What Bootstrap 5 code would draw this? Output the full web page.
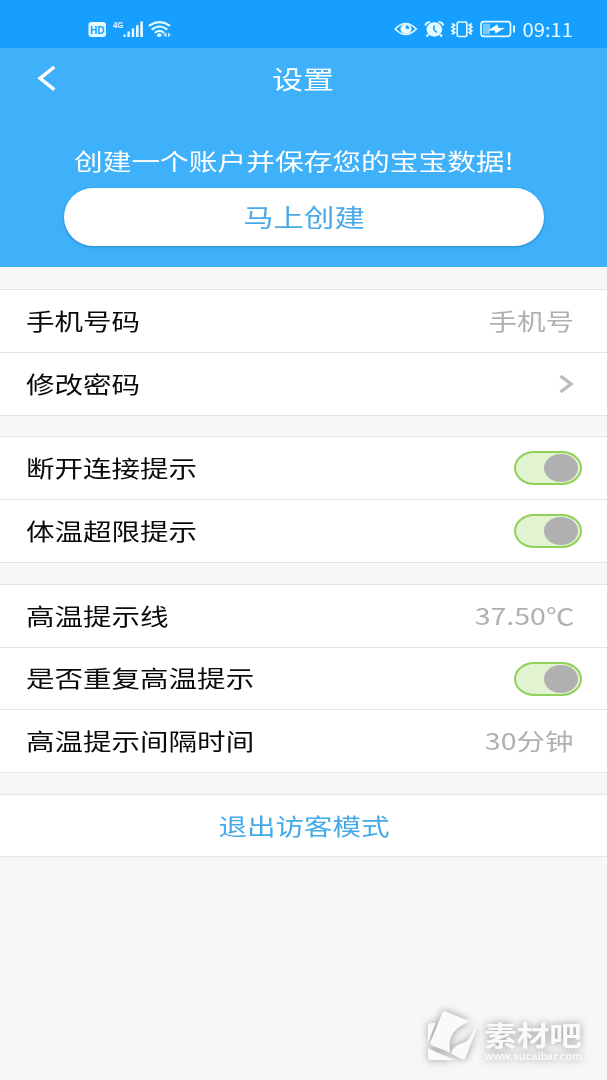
<!DOCTYPE html>
<html lang="zh-CN">
<head>
<meta charset="utf-8">
<meta name="viewport" content="width=device-width, initial-scale=1">
<title>设置</title>
<link href="https://cdn.jsdelivr.net/npm/bootstrap@5.3.0/dist/css/bootstrap.min.css" rel="stylesheet">
<style>
  body { font-family: "Noto Sans CJK SC", sans-serif; background: #f7f7f7; color: #0a0a0a; font-size: 23px; line-height: 1; }
  /* wide letterforms used across the app */
  .wide { display: inline-block; white-space: nowrap; padding-bottom: 2px; transform: scaleX(1.24); transform-origin: center; }
  .wide-start { transform-origin: left center; }
  .wide-end { transform-origin: right center; }
  .status { height: 48px; background: #169fff; padding: 10px 34px 0 88px; }
  .status svg { display: block; }
  .clock { font-size: 18px; color: #e6fbff; transform: scaleX(1.12); transform-origin: right center; line-height: 38px; margin-left: 10px; }
  .hero { height: 219px; background: #3fb1fa; color: #fff; }
  .titlebar { height: 62px; font-size: 25px; }
  .titlebar svg { display: block; }
  .side { width: 100px; padding-left: 37px; }
  .prompt { height: 24px; margin-top: 39px; padding-left: 74px; }
  .prompt .wide { transform: scaleX(1.248); }
  .btn-create { width: 480px; height: 58px; margin-top: 15px; background: #fff; color: #4aa9e6; font-size: 24.500px; line-height: 1; box-shadow: 0 1px 3px rgba(20,100,160,.5); }
  .btn-create .wide { padding-bottom: 0; }
  .group { border-top: 1px solid #e5e5e5; border-radius: 0; }
  .group .list-group-item { height: 63px; padding: 0 33px 0 25.500px; border: 0; border-bottom: 1px solid #e5e5e5; color: inherit; }
  .group .list-group-item.short { height: 62px; }
  .group .list-group-item.has-switch { padding-right: 25px; }
  .group .list-group-item.action { padding: 0 26px; }
  .g1 { margin-top: 22px; } .g2 { margin-top: 20px; } .g3, .g4 { margin-top: 21px; }
  .value { color: #b0b0b0; }
  .toggle { width: 68px; height: 34px; border: 2px solid #92d05c; border-radius: 20px / 17px; background: #e2f3d2; padding-right: 2px; }
  .knob { width: 34px; height: 28px; border-radius: 50%; background: #b0b0b0; }
  .exit { color: #46aae8; padding-bottom: 0; }
  .brand { padding: 0 25px 19px 0; }
  .brand svg { display: block; overflow: visible; filter: drop-shadow(0 0 4px rgba(0,0,0,.4)); }
</style>
</head>
<body class="min-vh-100 d-flex flex-column overflow-hidden">
<header>
  <div class="status d-flex justify-content-between">
    <svg width="86" height="38" viewBox="0 0 86 38" fill="#e6fbff">
      <rect x="0.5" y="12" width="17.5" height="15" rx="3"/>
      <text x="2" y="23.5" font-size="11" font-weight="700" fill="#169fff" textLength="14.5" lengthAdjust="spacingAndGlyphs" font-family="Liberation Sans, sans-serif">HD</text>
      <text x="25" y="17.5" font-size="9" font-weight="700" textLength="10" lengthAdjust="spacingAndGlyphs" font-family="Liberation Sans, sans-serif">4G</text>
      <path d="M35.5 24.5h2.2v2.5h-2.2zM39.4 21.5h2.4V27h-2.4zM43.7 18.5h2.5V27h-2.5zM48 15.300h2.600V27H48zM52.300 11.500h2.600V27h-2.600z"/>
      <g fill="none" stroke="#e6fbff" stroke-width="2.200" stroke-linecap="round">
        <path d="M61.700 15.300q9.800-6.500 19.600 0M64.500 19q7-5 14 0M67.500 22.300q4-2.700 8 0"/>
      </g>
      <ellipse cx="71.300" cy="25.200" rx="2.300" ry="1.900"/>
      <path d="M78.500 22.300v5l-3.300-2.500zM80 22.500l2.700 2.300-2.700 2.400z" opacity=".85"/>
    </svg>
    <div class="d-flex">
      <svg width="124" height="38" viewBox="0 0 124 38" fill="none" stroke="#e6fbff" stroke-width="1.700">
        <path d="M1.200 19Q11.500 8 22.300 19Q11.500 30 1.200 19z"/>
        <ellipse cx="12" cy="19" rx="5.500" ry="5" fill="#e6fbff" stroke="none"/>
        <path d="M11.800 18.800v-3.500a4 3.600 0 0 1 3.600 3.500z" fill="#169fff" stroke="none"/>
        <ellipse cx="40.300" cy="19.500" rx="7.800" ry="7.200" fill="#e6fbff" stroke="none"/>
        <path d="M31.500 15.500Q31.800 12.500 36 12M44.600 12q4.200.500 4.600 3.500M34.500 24.500l-2 2M46 24.500l2 2" stroke-width="2.200"/>
        <path d="M40 15.500v4.500l3 2.500" stroke="#169fff" stroke-width="1.600"/>
        <rect x="63.200" y="12" width="9.600" height="14.500" rx="1.500"/>
        <path d="M58 13.500l2.600 1.800-2.600 1.800 2.600 1.800-2.600 1.800 2.600 1.800-2.600 1.800M77.800 13.500l-2.600 1.800 2.600 1.800-2.600 1.800 2.600 1.800-2.600 1.800 2.600 1.800"/>
        <rect x="87" y="11.700" width="29.500" height="14.600" rx="2.800"/>
        <rect x="89" y="13.700" width="7" height="10.600" fill="#78c8ff" stroke="none"/>
        <path d="M94 20.500l9.500-6.300.700 3.600 6.800.200-9.500 5.500-.600-3z" fill="#fff" stroke="none"/>
        <path d="M120 15.500v7" stroke-width="2"/>
      </svg>
      <span class="clock">09:11</span>
    </div>
  </div>
  <div class="hero">
    <nav class="titlebar d-flex align-items-center justify-content-between">
      <div class="side"><svg width="20" height="28" viewBox="0 0 20 28" fill="none" stroke="#fff" stroke-width="3.400"><path d="M17.300 2L3 13.300L17.300 24.600"/></svg></div>
      <span class="wide">设置</span>
      <div class="side"></div>
    </nav>
    <div class="prompt"><span class="wide wide-start">创建一个账户并保存您的宝宝数据!</span></div>
    <button class="btn btn-create rounded-pill border-0 d-block mx-auto p-0"><span class="wide">马上创建</span></button>
  </div>
</header>
<main>
  <div class="list-group group g1">
    <div class="list-group-item d-flex align-items-center justify-content-between"><span class="wide wide-start">手机号码</span><span class="wide wide-end value">手机号</span></div>
    <div class="list-group-item d-flex align-items-center justify-content-between"><span class="wide wide-start">修改密码</span><svg width="15" height="20" viewBox="0 0 15 20" fill="none" stroke="#bcbcc0" stroke-width="3.300"><path d="M1.500 2L12 10L1.500 18"/></svg></div>
  </div>
  <div class="list-group group g2">
    <div class="list-group-item has-switch d-flex align-items-center justify-content-between"><span class="wide wide-start">断开连接提示</span><div class="toggle d-flex align-items-center justify-content-end"><div class="knob"></div></div></div>
    <div class="list-group-item has-switch d-flex align-items-center justify-content-between"><span class="wide wide-start">体温超限提示</span><div class="toggle d-flex align-items-center justify-content-end"><div class="knob"></div></div></div>
  </div>
  <div class="list-group group g3">
    <div class="list-group-item d-flex align-items-center justify-content-between"><span class="wide wide-start">高温提示线</span><span class="wide wide-end value">37.50℃</span></div>
    <div class="list-group-item short has-switch d-flex align-items-center justify-content-between"><span class="wide wide-start">是否重复高温提示</span><div class="toggle d-flex align-items-center justify-content-end"><div class="knob"></div></div></div>
    <div class="list-group-item d-flex align-items-center justify-content-between"><span class="wide wide-start">高温提示间隔时间</span><span class="wide wide-end value">30分钟</span></div>
  </div>
  <div class="list-group group g4">
    <button class="list-group-item short action d-flex align-items-center justify-content-center"><span class="wide exit">退出访客模式</span></button>
  </div>
</main>
<footer class="brand mt-auto d-flex justify-content-end">
  <svg width="156" height="56" viewBox="0 0 156 56" fill="#fafafa">
    <path d="M2 22q0-4 4-4h3.500L2 38z"/>
    <path d="M2 43.500L29 55H6q-4 0-4-4z"/>
    <path d="M16 8.500q1.200-3 4.500-1.800L44 16.500Q29 22 25 32q-2.500 7-1 15.500L6 40.500q-2.500-1-1.500-3.500z"/>
    <path d="M51.500 21.500L40 51.500q-1.500 3.500-4.500 2.500L25 48.500q2-7 9-9.500Q44.500 36 46.500 27z"/>
    <text x="58" y="41" font-size="27.500" font-weight="700" textLength="98" lengthAdjust="spacingAndGlyphs">素材吧</text>
    <text x="59" y="55" font-size="10.500" textLength="97" lengthAdjust="spacingAndGlyphs" font-family="Liberation Sans, sans-serif" font-weight="700">www.sucaibar.com</text>
  </svg>
</footer>
<script src="https://cdn.jsdelivr.net/npm/bootstrap@5.3.0/dist/js/bootstrap.bundle.min.js"></script>
</body>
</html>
